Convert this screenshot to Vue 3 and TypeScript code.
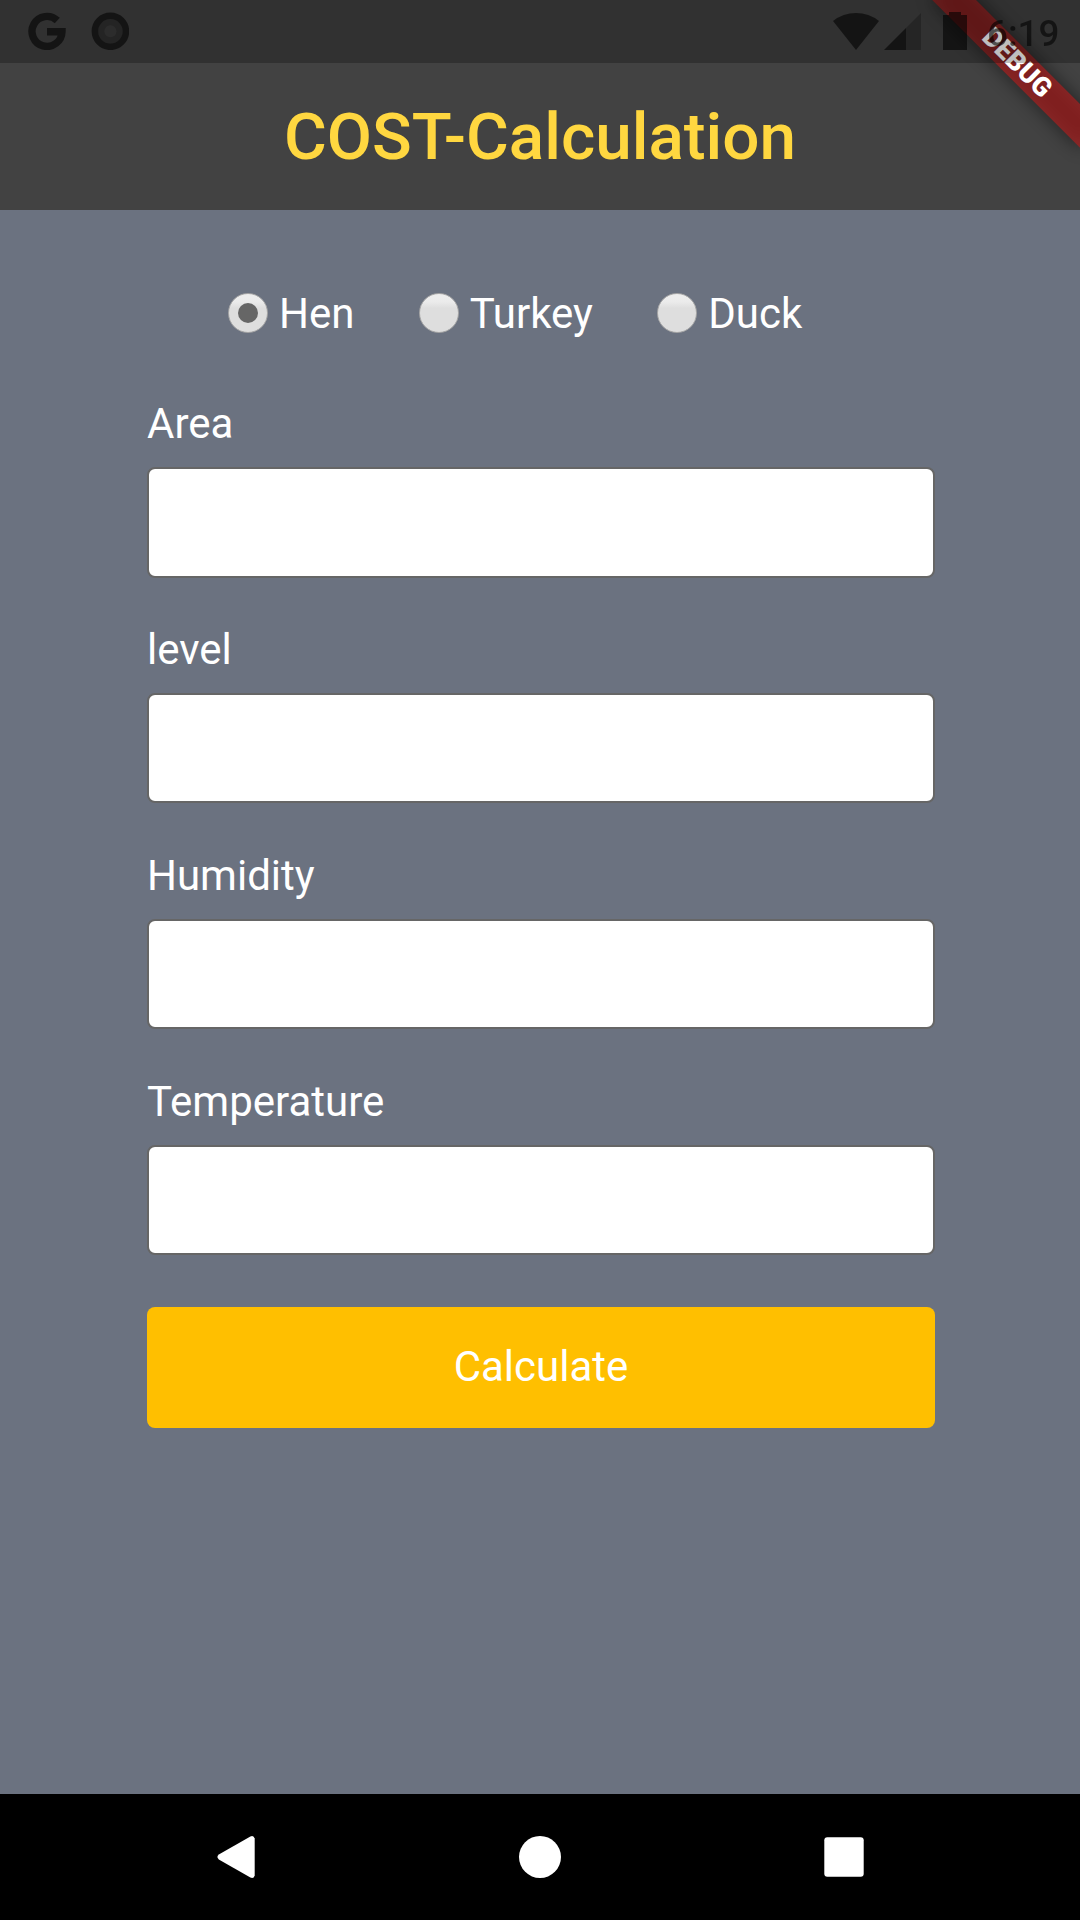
<script setup lang="ts">
import { ref } from 'vue'

interface Field {
  id: string
  label: string
}

const birds: string[] = ['Hen', 'Turkey', 'Duck']
const selected = ref<string>('Hen')

const fields: Field[] = [
  { id: 'area', label: 'Area' },
  { id: 'level', label: 'level' },
  { id: 'humidity', label: 'Humidity' },
  { id: 'temperature', label: 'Temperature' },
]
const values = ref<Record<string, string>>({ area: '', level: '', humidity: '', temperature: '' })
</script>

<template>
  <div class="screen">
    <header class="app-bar">
      <h1 class="title">COST-Calculation</h1>
    </header>

    <main class="content">
      <div class="birds">
        <label v-for="bird in birds" :key="bird" class="bird">
          <input v-model="selected" class="radio" type="radio" name="bird" :value="bird" />
          <span>{{ bird }}</span>
        </label>
      </div>

      <form class="form" @submit.prevent>
        <div v-for="field in fields" :key="field.id" class="field">
          <label class="label" :for="field.id">{{ field.label }}</label>
          <input :id="field.id" v-model="values[field.id]" class="input" type="text" />
        </div>
        <button class="submit" type="submit">Calculate</button>
      </form>
    </main>

    <nav class="nav-bar">
      <svg class="nav-icon" viewBox="0 0 48 48">
        <path d="M6.800 21.600 38.400 3.400Q41.700 2 42.700 5.500V42.500Q41.700 46 38.400 44.600L6.800 26.400Q4 24 6.800 21.600Z" fill="#fff" />
      </svg>
      <svg class="nav-icon" viewBox="0 0 48 48">
        <circle cx="24" cy="24" r="21" fill="#fff" />
      </svg>
      <svg class="nav-icon" viewBox="0 0 48 48">
        <rect x="4.300" y="4.300" width="39.400" height="39.400" rx="3" fill="#fff" />
      </svg>
    </nav>

    <div class="banner">
      <div class="banner-shadow"></div>
      <div class="banner-band">DEBUG</div>
    </div>

    <div class="status-bar">
      <div class="status-left">
        <svg width="38" height="38" viewBox="0 0 38 38">
          <path d="M29.300 8.500A15 15 0 1 0 34 19.700H19" fill="none" stroke="#000" stroke-width="7.400" />
        </svg>
        <svg width="38" height="38" viewBox="0 0 38 38">
          <circle cx="19.400" cy="19.300" r="15.500" fill="none" stroke="#000" stroke-width="6.600" />
          <circle cx="19.400" cy="19.300" r="12.500" fill="#000" fill-opacity=".44" />
          <circle cx="19.400" cy="19.300" r="6" fill="#777" fill-opacity=".15" />
        </svg>
      </div>
      <div class="status-right">
        <svg width="134" height="38" viewBox="0 0 134 38">
          <path d="M0 9Q10 1 23 1T46 9L23 38Z" />
          <path d="M88 1V38H73V16Z" fill-opacity=".4" />
          <path d="M73 16V38H51Z" />
          <path d="M116 0H128V3H134V38H110V3H116Z" />
        </svg>
        <span class="clock">6:19</span>
      </div>
    </div>
  </div>
</template>

<style>
body {
  margin: 0;
  background: #6b7280;
}
</style>

<style scoped>
.screen {
  position: relative;
  display: flex;
  flex-direction: column;
  width: 1080px;
  height: 1920px;
  overflow: hidden;
  background: #6b7280;
  color: #fff;
  font-family: Roboto, "Liberation Sans", sans-serif;
  font-size: 42px;
}

.app-bar {
  display: flex;
  align-items: center;
  justify-content: center;
  box-sizing: border-box;
  height: 210px;
  padding-top: 63px;
  background: #424242;
}

.title {
  margin: 0;
  color: #ffd740;
  font-size: 65.625px;
  font-weight: 500;
  line-height: 77px;
  white-space: nowrap;
}

.content {
  flex: 1;
  display: flex;
  flex-direction: column;
}

.birds {
  display: flex;
  gap: 64.300px;
  padding: 83px 0 0 228px;
  height: 40px;
}

.bird {
  display: flex;
  align-items: center;
  gap: 11px;
  height: 40px;
  line-height: 52px;
}

.bird span {
  padding-top: 2px;
}

.radio {
  appearance: none;
  flex: none;
  display: grid;
  place-items: center;
  box-sizing: border-box;
  width: 40px;
  height: 40px;
  margin: 0;
  border: 1px solid #a6a6a6;
  border-radius: 50%;
  background: linear-gradient(#ededed 10%, #ebebeb 22%, #dedede 38%) border-box;
}

.radio:checked::before {
  content: "";
  width: 20px;
  height: 20px;
  border-radius: 50%;
  background: #666;
}

.form {
  display: flex;
  flex-direction: column;
  width: 788px;
  margin: 65px 0 0 147px;
}

.field {
  display: flex;
  flex-direction: column;
  height: 226px;
}

.label {
  height: 69px;
  line-height: 52px;
}

.input {
  box-sizing: border-box;
  width: 100%;
  height: 110px;
  padding: 0 20px;
  border: 2px solid #666;
  border-radius: 8px;
  outline: none;
  background: #fff;
  color: #222;
  font: inherit;
}

.field:first-child .input {
  height: 111px;
}

.submit {
  height: 121px;
  margin-top: 5px;
  padding: 0 0 2px;
  border: 0;
  border-radius: 8px;
  background: #ffbf00;
  color: #fff;
  font: inherit;
}

.nav-bar {
  display: flex;
  justify-content: center;
  align-items: center;
  gap: 256px;
  height: 126px;
  background: #000;
}

.nav-icon {
  width: 48px;
  height: 48px;
}

/* The ribbon is laid flat, then turned 45° about the top right corner. */
.banner {
  position: absolute;
  top: 0;
  left: 975px;
  width: 210px;
  height: 31px;
  transform: rotate(45deg) translateY(73.500px);
  transform-origin: 105px 0;
}

.banner-shadow,
.banner-band {
  position: absolute;
  inset: 0;
}

.banner-shadow {
  background: rgba(0, 0, 0, 0.5);
  filter: blur(9.600px);
}

.banner-band {
  background: rgba(183, 28, 28, 0.627);
  font-size: 26.775px;
  font-weight: 900;
  line-height: 31px;
  text-align: center;
}

.status-bar {
  position: absolute;
  inset: 0 0 auto;
  display: flex;
  justify-content: space-between;
  box-sizing: border-box;
  height: 63px;
  padding: 12px 20px 0 28px;
  background: rgba(0, 0, 0, 0.25);
}

.status-left,
.status-right {
  display: flex;
  height: 38px;
  opacity: 0.58;
  color: #000;
}

.status-left {
  gap: 25px;
}

.status-right {
  gap: 20px;
}

.clock {
  width: 73px;
  font-size: 36.750px;
  font-weight: 500;
  line-height: 43px;
}
</style>
